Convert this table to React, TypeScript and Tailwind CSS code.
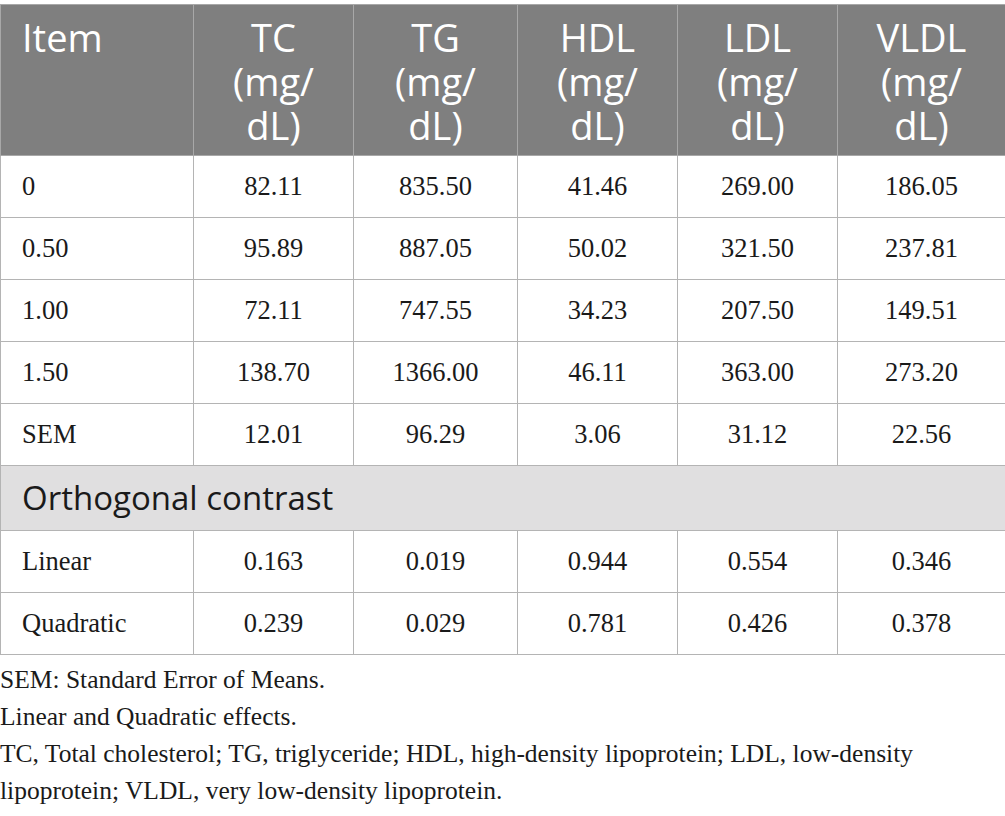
import React from "react";

const headers = ["TC", "TG", "HDL", "LDL", "VLDL"];
const rows: string[][] = [
  ["0", "82.11", "835.50", "41.46", "269.00", "186.05"],
  ["0.50", "95.89", "887.05", "50.02", "321.50", "237.81"],
  ["1.00", "72.11", "747.55", "34.23", "207.50", "149.51"],
  ["1.50", "138.70", "1366.00", "46.11", "363.00", "273.20"],
  ["SEM", "12.01", "96.29", "3.06", "31.12", "22.56"],
];
const contrast: string[][] = [
  ["Linear", "0.163", "0.019", "0.944", "0.554", "0.346"],
  ["Quadratic", "0.239", "0.029", "0.781", "0.426", "0.378"],
];

const sans = { fontFamily: "'Open Sans', 'Noto Sans', sans-serif" };
const serif = { fontFamily: "'Liberation Serif', 'Times New Roman', serif" };

function BodyRow({ r }: { r: string[] }) {
  return (
    <tr className="h-[62px]">
      {r.map((c, i) => (
        <td
          key={i}
          className={`border border-[#b4b4b4] text-[26.5px] text-[#1a1a1a] ${i === 0 ? "text-left pl-[21px]" : "text-center"}`}
          style={serif}
        >
          {c}
        </td>
      ))}
    </tr>
  );
}

export default function App() {
  return (
    <div className="w-[1005px] bg-white pt-[4px]">
      <table className="w-[1005px] table-fixed border-collapse">
        <colgroup>
          <col className="w-[193px]" />
          <col className="w-[160px]" />
          <col className="w-[164px]" />
          <col className="w-[160px]" />
          <col className="w-[160px]" />
          <col className="w-[168px]" />
        </colgroup>
        <thead>
          <tr className="h-[151px] bg-[#7f7f7f]">
            <th
              className="border border-[#a8a8a8] text-left align-top pl-[21px] pt-[10px] text-[38px] font-normal leading-[44px] text-white"
              style={sans}
            >
              Item
            </th>
            {headers.map((h) => (
              <th
                key={h}
                className="border border-[#a8a8a8] text-center align-top pt-[10px] text-[38px] font-normal leading-[44px] text-white"
                style={sans}
              >
                <div>{h}</div>
                <div>(mg/</div>
                <div>dL)</div>
              </th>
            ))}
          </tr>
        </thead>
        <tbody>
          {rows.map((r, i) => (
            <BodyRow key={i} r={r} />
          ))}
          <tr className="h-[65px] bg-[#e0dfe0]">
            <td
              colSpan={6}
              className="border border-[#b4b4b4] pl-[21px] text-[33px] text-[#1a1a1a]"
              style={sans}
            >
              Orthogonal contrast
            </td>
          </tr>
          {contrast.map((r, i) => (
            <BodyRow key={i} r={r} />
          ))}
        </tbody>
      </table>
      <div className="pt-[6px] text-[25.5px] leading-[37px] text-[#1a1a1a]" style={serif}>
        <p>SEM: Standard Error of Means.</p>
        <p>Linear and Quadratic effects.</p>
        <p>
          TC, Total cholesterol; TG, triglyceride; HDL, high-density lipoprotein; LDL, low-density
          lipoprotein; VLDL, very low-density lipoprotein.
        </p>
      </div>
    </div>
  );
}
